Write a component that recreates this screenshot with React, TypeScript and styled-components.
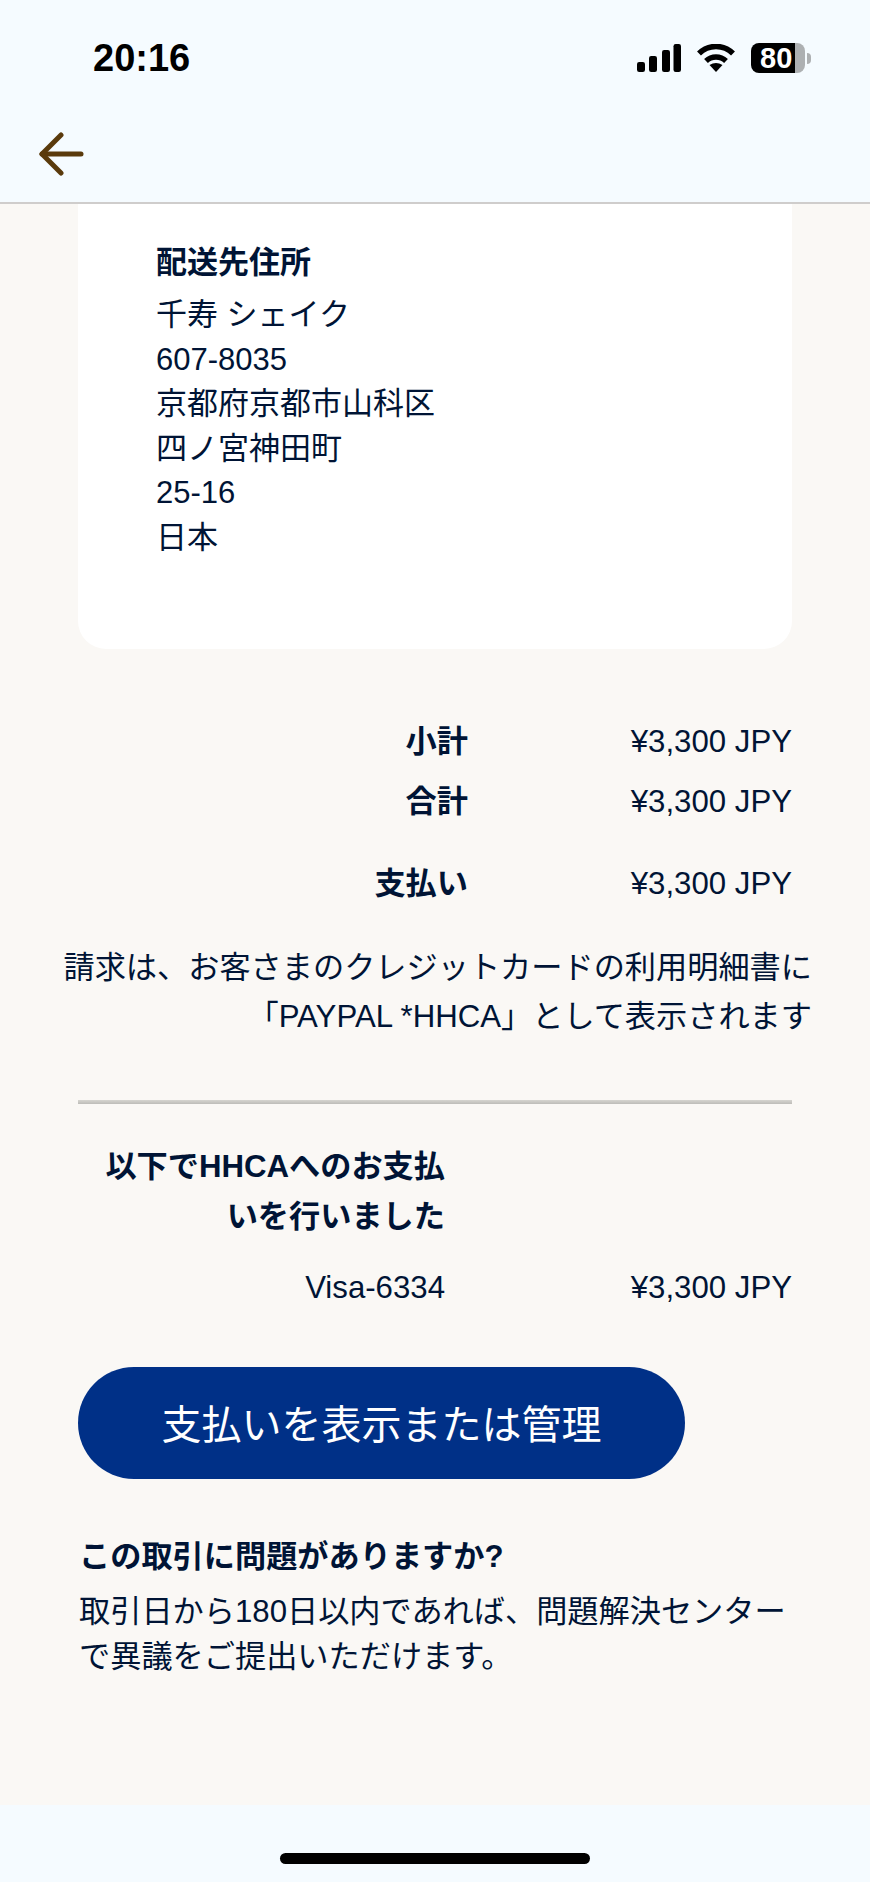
import React from 'react';
import styled, { createGlobalStyle } from 'styled-components';

const GlobalStyle = createGlobalStyle`
    html, body {
        margin: 0;
        padding: 0;
        background: #faf8f5;
    }
    body {
        font-family: "Liberation Sans", "Noto Sans CJK JP", sans-serif;
        color: #001435;
    }
`;

const Page = styled.div`
    width: 870px;
    height: 1882px;
    display: flex;
    flex-direction: column;
    overflow: hidden;
    background: #faf8f5;
`;

const Header = styled.header`
    height: 204px;
    box-sizing: border-box;
    background: #f5fbff;
    border-bottom: 2px solid #cfcdcc;
`;

const StatusBar = styled.div`
    height: 116px;
    padding: 0 59px 0 93px;
    display: flex;
    align-items: center;
    justify-content: space-between;
`;

const Clock = styled.span`
    font-size: 38px;
    font-weight: 700;
    color: #000;
`;

const StatusIcons = styled.div`
    display: flex;
    align-items: center;
    gap: 16px;
`;

const Battery = styled.div`
    display: flex;
    align-items: center;
    gap: 2px;
`;

const BatteryBody = styled.div`
    width: 54px;
    height: 30px;
    border-radius: 8px;
    background: linear-gradient(90deg, #000 0 44px, #adb0b2 44px);
    color: #fff;
    font-size: 29px;
    font-weight: 700;
    line-height: 30px;
    padding-left: 9px;
    box-sizing: border-box;
`;

const BatteryTip = styled.div`
    width: 4px;
    height: 11px;
    border-radius: 0 4px 4px 0;
    background: #adb0b2;
`;

const Nav = styled.div`
    padding: 16px 0 0 38px;
    line-height: 0;
`;

const Main = styled.main`
    flex: 1;
    padding: 0 78px;
`;

const Card = styled.section`
    background: #fff;
    border-radius: 0 0 28px 28px;
    padding: 33px 78px 89px;
`;

const CardTitle = styled.h3`
    margin: 0 0 4px;
    font-size: 31px;
    font-weight: 700;
    line-height: 52px;
`;

const AddressLine = styled.div`
    font-size: 31px;
    line-height: 44.5px;
`;

const AmountRow = styled.div<{ $labelWidth: number; $top: number }>`
    display: grid;
    grid-template-columns: ${(p) => p.$labelWidth}px 1fr;
    margin-top: ${(p) => p.$top}px;
    font-size: 31.2px;
    line-height: 46px;
`;

const RowLabel = styled.span<{ $bold?: boolean }>`
    text-align: right;
    font-weight: ${(p) => (p.$bold ? 700 : 400)};
`;

const RowValue = styled.span`
    text-align: right;
`;

const Notice = styled.p`
    margin: 36px -20px 0 -30px;
    font-size: 31.2px;
    line-height: 49px;
    text-align: right;
`;

const Divider = styled.hr`
    margin: 59px 0 0;
    height: 4px;
    border: 0;
    background: linear-gradient(180deg, #d6d5d0, #bdbcb8);
`;

const PaidHeading = styled.h4`
    width: 367px;
    margin: 38px 0 0;
    font-size: 31.2px;
    font-weight: 700;
    line-height: 50px;
    text-align: right;
`;

const ManageButton = styled.button`
    display: block;
    width: 607px;
    height: 112px;
    margin-top: 56px;
    border: 0;
    border-radius: 56px;
    background: #003087;
    color: #fff;
    font-family: inherit;
    font-size: 40px;
    padding: 0 0 2px;
`;

const HelpTitle = styled.h4`
    margin: 55px 0 0 1px;
    font-size: 31.2px;
    font-weight: 700;
    line-height: 46px;
`;

const HelpText = styled.p`
    margin: 9px -20px 0 1px;
    font-size: 31.2px;
    line-height: 45px;
`;

const Footer = styled.footer`
    height: 77px;
    background: #f5fbff;
    display: flex;
    justify-content: center;
    padding-top: 48px;
    box-sizing: border-box;
`;

const HomeBar = styled.div`
    width: 310px;
    height: 11px;
    border-radius: 6px;
    background: #000;
`;

const SignalIcon = () => (
    <svg width="44" height="28" viewBox="0 0 44 28" fill="#000">
        <rect x="0" y="18" width="8" height="10" rx="2.2" />
        <rect x="12" y="12" width="8" height="16" rx="2.2" />
        <rect x="25" y="6" width="8" height="22" rx="2.2" />
        <rect x="36.5" y="0" width="7.5" height="28" rx="2.2" />
    </svg>
);

const WifiIcon = () => (
    <svg width="38" height="28" viewBox="0 0 38 28" fill="none">
        <path d="M2 9.5A24 24 0 0 1 36 9.5" stroke="#000" strokeWidth="5.5" />
        <path d="M9 17A14.5 14.5 0 0 1 29 17" stroke="#000" strokeWidth="5.5" />
        <path d="M12.5 21Q19 17 25.5 21L19 28Z" fill="#000" />
    </svg>
);

const BackArrow = () => (
    <svg width="46" height="44" viewBox="0 0 46 44" fill="none" stroke="#5a3a0c" strokeWidth="5" strokeLinecap="round" strokeLinejoin="round">
        <path d="M4 22H43" />
        <path d="M23 3L4 22L23 41" />
    </svg>
);

const address = ['千寿 シェイク', '607-8035', '京都府京都市山科区', '四ノ宮神田町', '25-16', '日本'];

const App: React.FC = () => (
    <Page>
        <GlobalStyle />
        <Header>
            <StatusBar>
                <Clock>20:16</Clock>
                <StatusIcons>
                    <SignalIcon />
                    <WifiIcon />
                    <Battery>
                        <BatteryBody>80</BatteryBody>
                        <BatteryTip />
                    </Battery>
                </StatusIcons>
            </StatusBar>
            <Nav>
                <BackArrow />
            </Nav>
        </Header>
        <Main>
            <Card>
                <CardTitle>配送先住所</CardTitle>
                {address.map((line) => (
                    <AddressLine key={line}>{line}</AddressLine>
                ))}
            </Card>
            <AmountRow $labelWidth={390} $top={70}>
                <RowLabel $bold>小計</RowLabel>
                <RowValue>¥3,300 JPY</RowValue>
            </AmountRow>
            <AmountRow $labelWidth={390} $top={14}>
                <RowLabel $bold>合計</RowLabel>
                <RowValue>¥3,300 JPY</RowValue>
            </AmountRow>
            <AmountRow $labelWidth={390} $top={36}>
                <RowLabel $bold>支払い</RowLabel>
                <RowValue>¥3,300 JPY</RowValue>
            </AmountRow>
            <Notice>
                請求は、お客さまのクレジットカードの利用明細書に
                <br />
                「PAYPAL *HHCA」として表示されます
            </Notice>
            <Divider />
            <PaidHeading>
                以下でHHCAへのお支払
                <br />
                いを行いました
            </PaidHeading>
            <AmountRow $labelWidth={367} $top={23}>
                <RowLabel>Visa-6334</RowLabel>
                <RowValue>¥3,300 JPY</RowValue>
            </AmountRow>
            <ManageButton>支払いを表示または管理</ManageButton>
            <HelpTitle>この取引に問題がありますか?</HelpTitle>
            <HelpText>
                取引日から180日以内であれば、問題解決センター
                <br />
                で異議をご提出いただけます。
            </HelpText>
        </Main>
        <Footer>
            <HomeBar />
        </Footer>
    </Page>
);

export default App;
